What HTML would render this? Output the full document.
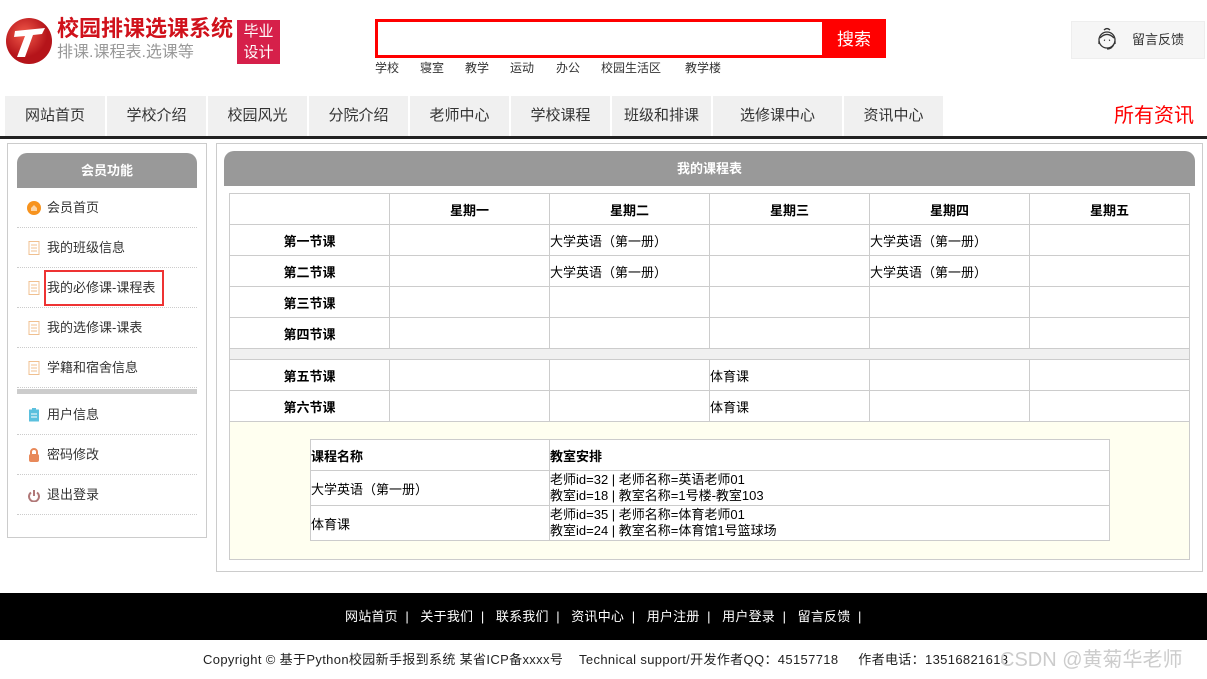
<!DOCTYPE html>
<html><head><meta charset="utf-8"><style>
*{margin:0;padding:0;box-sizing:border-box}
body{width:1207px;height:679px;background:#fff;font-family:"Liberation Sans","Noto Sans CJK SC",sans-serif;font-size:13px;color:#333;position:relative;overflow:hidden}
.a{position:absolute}
.nav div{position:absolute;top:96px;height:40px;background:#f0f0f0;font-size:15px;line-height:40px;text-align:center;color:#333}
.side .it{position:absolute;left:17px;width:180px;height:40px;border-bottom:1px dotted #ccc;line-height:40px;padding-left:30px;font-size:13px;color:#333}
.ic{position:absolute;left:10px;top:13px;width:14px;height:14px}
table{border-collapse:collapse;table-layout:fixed}
td{border:1px solid #ccc;font-size:13px;color:#000;padding:0}
.tt td{height:31px}
.tt td.b{font-weight:bold;text-align:center}
</style></head><body>
<!-- logo -->
<svg class="a" style="left:5px;top:17px" width="48" height="48" viewBox="0 0 48 48"><defs><radialGradient id="g" cx="40%" cy="35%"><stop offset="0" stop-color="#f25a4a"/><stop offset="1" stop-color="#b5141a"/></radialGradient></defs><circle cx="24" cy="24" r="23" fill="url(#g)"/><path d="M10 14 L40 11 L37 17 L28 18 L20 40 L12 40 L20 19 L9 20 Z" fill="#fff"/></svg>
<div class="a" style="left:57px;top:15px;font-size:22px;font-weight:bold;color:#d0111b;line-height:28px">校园排课选课系统</div>
<div class="a" style="left:57px;top:43px;font-size:16px;color:#999;line-height:20px">排课.课程表.选课等</div>
<div class="a" style="left:237px;top:20px;width:43px;height:44px;background:#d6204a;color:#fff;font-size:15px;line-height:21px;text-align:center;padding-top:1px">毕业<br>设计</div>
<!-- search -->
<div class="a" style="left:375px;top:19px;width:511px;height:39px;border:3px solid #f00;background:#fff"></div>
<div class="a" style="left:822px;top:19px;width:64px;height:39px;background:#f00;color:#fff;font-size:17px;line-height:41px;text-align:center">搜索</div>
<div class="a" style="top:60px;left:375px;font-size:12px;color:#333;line-height:16px">学校</div>
<div class="a" style="top:60px;left:420px;font-size:12px;line-height:16px">寝室</div>
<div class="a" style="top:60px;left:465px;font-size:12px;line-height:16px">教学</div>
<div class="a" style="top:60px;left:510px;font-size:12px;line-height:16px">运动</div>
<div class="a" style="top:60px;left:556px;font-size:12px;line-height:16px">办公</div>
<div class="a" style="top:60px;left:601px;font-size:12px;line-height:16px">校园生活区</div>
<div class="a" style="top:60px;left:685px;font-size:12px;line-height:16px">教学楼</div>
<!-- feedback -->
<div class="a" style="left:1071px;top:21px;width:134px;height:38px;background:#f6f6f6;border:1px solid #eee"></div>
<svg class="a" style="left:1095px;top:27px" width="24" height="26" viewBox="0 0 24 26" fill="none" stroke="#333" stroke-width="1.3"><circle cx="12" cy="13" r="8"/><path d="M5 11 Q12 4 19 11"/><path d="M9 3 Q12 0 15 3"/><path d="M4 14v3M20 14v3M19 17 Q17 22 12 22"/><path d="M9 13l1 .5M14 13.5l1-.5"/></svg>
<div class="a" style="left:1132px;top:31px;font-size:13px;line-height:18px">留言反馈</div>
<!-- nav -->
<div class="nav">
<div style="left:5px;width:100px">网站首页</div>
<div style="left:107px;width:99px">学校介绍</div>
<div style="left:208px;width:99px">校园风光</div>
<div style="left:309px;width:99px">分院介绍</div>
<div style="left:410px;width:99px">老师中心</div>
<div style="left:511px;width:99px">学校课程</div>
<div style="left:612px;width:99px">班级和排课</div>
<div style="left:713px;width:129px">选修课中心</div>
<div style="left:844px;width:99px">资讯中心</div>
</div>
<div class="a" style="left:1114px;top:103px;font-size:20px;color:#f00;line-height:26px">所有资讯</div>
<div class="a" style="left:0;top:136px;width:1207px;height:3px;background:#222"></div>
<!-- sidebar -->
<div class="side">
<div class="a" style="left:7px;top:143px;width:200px;height:395px;border:1px solid #ccc"></div>
<div class="a" style="left:17px;top:153px;width:180px;height:35px;background:#999;border-radius:10px 10px 0 0;color:#fff;font-weight:bold;text-align:center;line-height:36px">会员功能</div>
<div class="it" style="top:188px"><svg class="ic" viewBox="0 0 14 14"><circle cx="7" cy="7" r="7" fill="#f7931e"/><path d="M4 10V7l3-3 3 3v3z" fill="#fff" opacity=".6"/></svg>会员首页</div>
<div class="it" style="top:228px"><svg class="ic" viewBox="0 0 14 14"><rect x="2" y="0.5" width="10" height="13" fill="#fff" stroke="#f0c090"/><path d="M4 4h6M4 7h6M4 10h6" stroke="#f0c090"/></svg>我的班级信息</div>
<div class="it" style="top:268px"><svg class="ic" viewBox="0 0 14 14"><rect x="2" y="0.5" width="10" height="13" fill="#fff" stroke="#f0c090"/><path d="M4 4h6M4 7h6M4 10h6" stroke="#f0c090"/></svg>我的必修课-课程表</div>
<div class="it" style="top:308px"><svg class="ic" viewBox="0 0 14 14"><rect x="2" y="0.5" width="10" height="13" fill="#fff" stroke="#f0c090"/><path d="M4 4h6M4 7h6M4 10h6" stroke="#f0c090"/></svg>我的选修课-课表</div>
<div class="it" style="top:348px"><svg class="ic" viewBox="0 0 14 14"><rect x="2" y="0.5" width="10" height="13" fill="#fff" stroke="#f0c090"/><path d="M4 4h6M4 7h6M4 10h6" stroke="#f0c090"/></svg>学籍和宿舍信息</div>
<div class="a" style="left:17px;top:389px;width:180px;height:5px;background:#ccc"></div>
<div class="it" style="top:395px"><svg class="ic" viewBox="0 0 14 14"><rect x="2" y="1.5" width="10" height="12" fill="#5bc0de"/><rect x="5" y="0" width="4" height="3" fill="#5bc0de"/><path d="M4 6h6M4 9h6" stroke="#fff"/></svg>用户信息</div>
<div class="it" style="top:435px"><svg class="ic" viewBox="0 0 14 14"><path d="M4 7V4a3 3 0 0 1 6 0v3" stroke="#e8895a" stroke-width="2" fill="none"/><rect x="2" y="6" width="10" height="8" rx="2" fill="#e8895a"/></svg>密码修改</div>
<div class="it" style="top:475px"><svg class="ic" viewBox="0 0 14 14"><path d="M4 4.5a5 5 0 1 0 6 0" stroke="#b07878" stroke-width="2" fill="none"/><path d="M7 2v6" stroke="#b07878" stroke-width="2"/></svg>退出登录</div>
<div class="a" style="left:44px;top:270px;width:120px;height:36px;border:2px solid #e33"></div>
</div>
<!-- main -->
<div class="a" style="left:216px;top:143px;width:987px;height:429px;border:1px solid #ccc"></div>
<div class="a" style="left:224px;top:151px;width:971px;height:35px;background:#999;border-radius:10px 10px 0 0;color:#fff;font-weight:bold;text-align:center;line-height:36px">我的课程表</div>
<div class="a" style="left:229px;top:421px;width:961px;height:139px;background:#fffff0;border:1px solid #ccc;border-top:none"></div>
<table class="a tt" style="left:229px;top:193px;width:961px;background:#fff">
<tr><td class="b"></td><td class="b">星期一</td><td class="b">星期二</td><td class="b">星期三</td><td class="b">星期四</td><td class="b">星期五</td></tr>
<tr><td class="b">第一节课</td><td></td><td>大学英语（第一册）</td><td></td><td>大学英语（第一册）</td><td></td></tr>
<tr><td class="b">第二节课</td><td></td><td>大学英语（第一册）</td><td></td><td>大学英语（第一册）</td><td></td></tr>
<tr><td class="b">第三节课</td><td></td><td></td><td></td><td></td><td></td></tr>
<tr><td class="b">第四节课</td><td></td><td></td><td></td><td></td><td></td></tr>
<tr><td colspan="6" style="height:11px;background:#f0f0f0"></td></tr>
<tr><td class="b">第五节课</td><td></td><td></td><td>体育课</td><td></td><td></td></tr>
<tr><td class="b">第六节课</td><td></td><td></td><td>体育课</td><td></td><td></td></tr>
</table>
<table class="a" style="left:310px;top:439px;width:800px;background:#fff">
<tr><td style="width:239px;height:31px;font-weight:bold">课程名称</td><td style="font-weight:bold">教室安排</td></tr>
<tr><td style="height:35px">大学英语（第一册）</td><td style="line-height:16px">老师id=32 | 老师名称=英语老师01<br>教室id=18 | 教室名称=1号楼-教室103</td></tr>
<tr><td style="height:35px">体育课</td><td style="line-height:16px">老师id=35 | 老师名称=体育老师01<br>教室id=24 | 教室名称=体育馆1号篮球场</td></tr>
</table>
<!-- footer -->
<div class="a" style="left:0;top:593px;width:1207px;height:47px;background:#000;color:#fff;font-size:13px;line-height:47px;padding-left:345px;white-space:nowrap;letter-spacing:0.2px">网站首页 &nbsp;|&nbsp;&nbsp; 关于我们 &nbsp;|&nbsp;&nbsp; 联系我们 &nbsp;|&nbsp;&nbsp; 资讯中心 &nbsp;|&nbsp;&nbsp; 用户注册 &nbsp;|&nbsp;&nbsp; 用户登录 &nbsp;|&nbsp;&nbsp; 留言反馈 &nbsp;|</div>
<div class="a" style="left:203px;top:651px;font-size:13px;color:#222;line-height:18px;white-space:nowrap;letter-spacing:0.35px">Copyright © 基于Python校园新手报到系统 某省ICP备xxxx号 &nbsp;&nbsp; Technical support/开发作者QQ：45157718 &nbsp;&nbsp;&nbsp; 作者电话：13516821613</div>
<div class="a" style="left:1000px;top:647px;font-size:20px;color:#ccc;line-height:26px;white-space:nowrap">CSDN @黄菊华老师</div>
</body></html>
